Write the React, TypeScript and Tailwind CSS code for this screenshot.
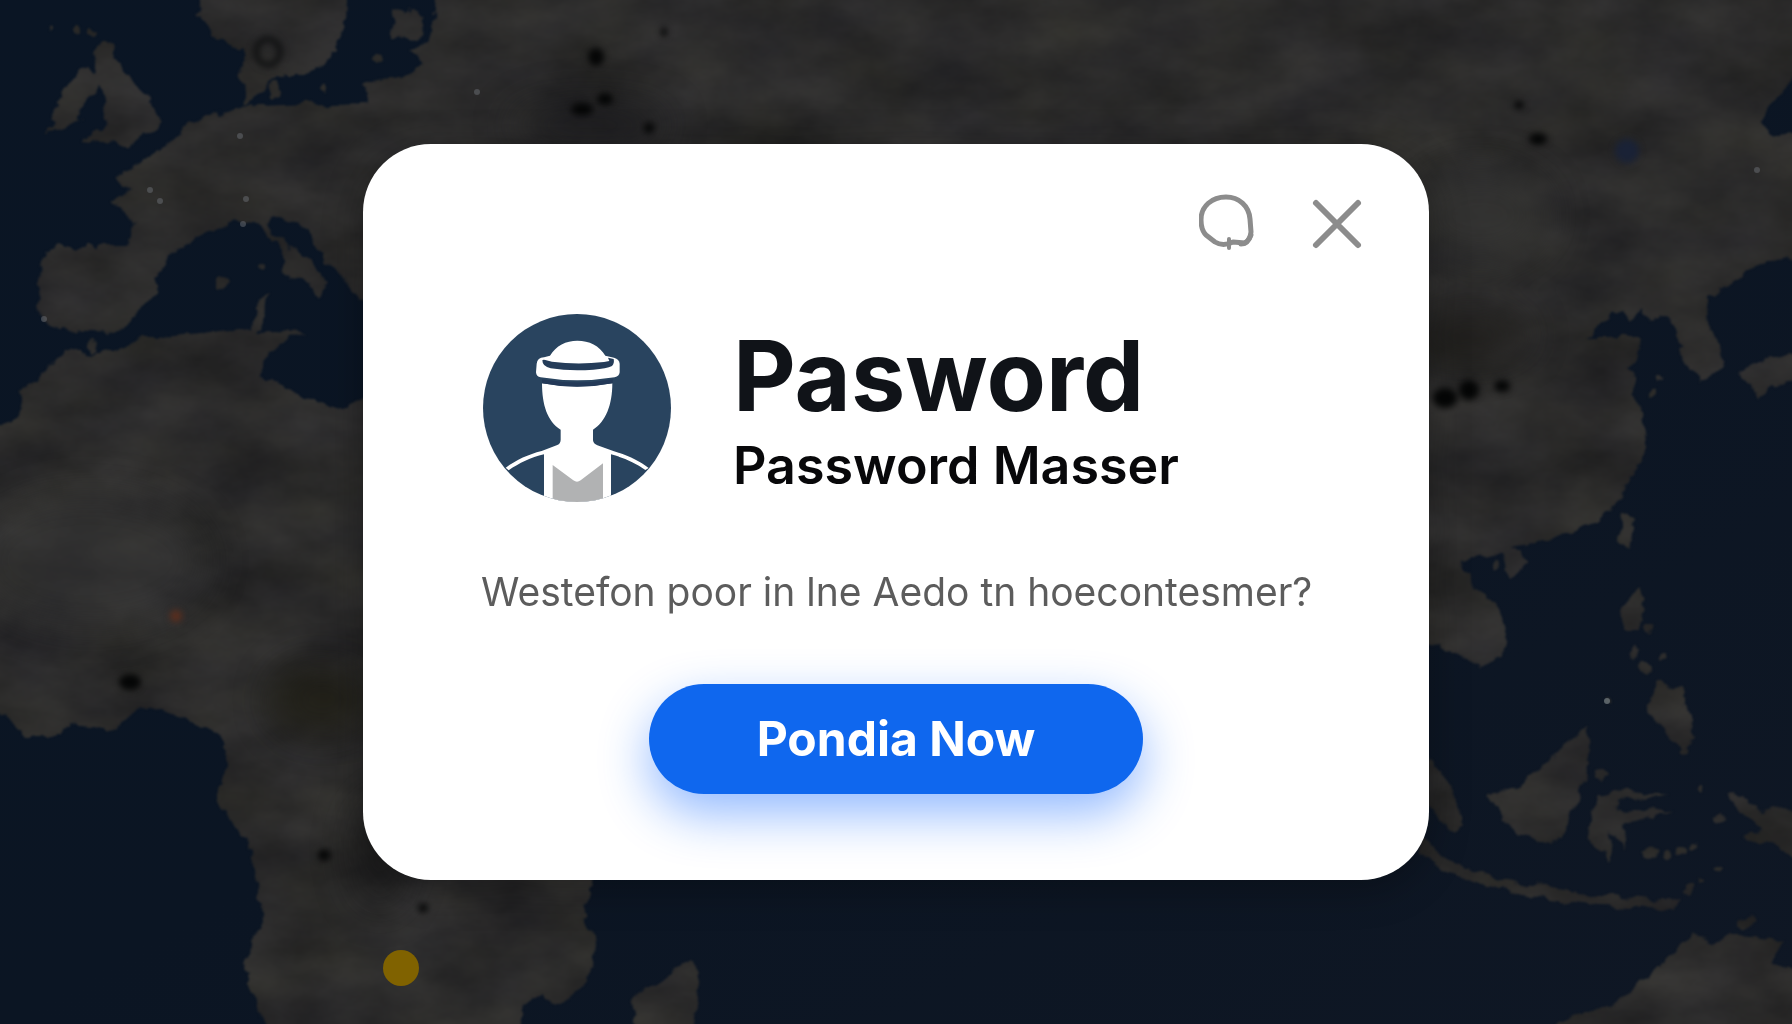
const darkSpots: [number, number, number, number][] = [
  [596, 57, 8, 9],
  [605, 99, 8, 6],
  [582, 109, 11, 6],
  [664, 32, 3, 5],
  [649, 128, 5, 5],
  [1445, 398, 12, 10],
  [1469, 390, 10, 10],
  [1502, 386, 8, 6],
  [1538, 139, 9, 6],
  [1519, 105, 5, 4],
  [130, 682, 11, 8],
  [324, 855, 6, 6],
  [423, 908, 5, 4],
];

const islets: [number, number, number][] = [
  [1607, 701, 4], [1650, 628, 5], [1636, 651, 5], [1660, 658, 4], [1645, 668, 6], [1702, 789, 4],
  [1649, 853, 7], [1667, 855, 5], [1682, 851, 6], [1695, 844, 4], [1689, 890, 4], [1701, 880, 3],
  [1718, 871, 3], [1718, 820, 5], [1747, 922, 6], [1652, 393, 4], [1661, 378, 3], [1685, 754, 5],
  [331, 50, 4], [379, 60, 4], [273, 91, 7], [324, 88, 4], [260, 267, 4], [222, 283, 6], [52, 29, 3],
  [75, 30, 3], [92, 33, 3], [1496, 565, 3], [1600, 775, 6], [94, 345, 5],
];

const glints: [number, number][] = [
  [160, 201], [246, 199], [240, 136], [44, 319], [243, 224], [477, 92], [1757, 170], [150, 190],
];

function WorldMap() {
  return (
    <svg
      className="absolute inset-0 size-full"
      viewBox="0 0 1792 1024"
      preserveAspectRatio="xMidYMid slice"
      aria-hidden="true"
    >
      <defs>
        <linearGradient id="sea" x1="0" y1="0" x2="1" y2="1">
          <stop offset="0" stopColor="#0a1524" />
          <stop offset="0.5" stopColor="#0b1523" />
          <stop offset="1" stopColor="#0f1724" />
        </linearGradient>
        <filter id="coast" x="-40" y="-40" width="1872" height="1104" filterUnits="userSpaceOnUse" colorInterpolationFilters="sRGB">
          <feTurbulence type="fractalNoise" baseFrequency="0.06" numOctaves="3" seed="4" result="edge" />
          <feDisplacementMap in="SourceGraphic" in2="edge" scale="14" xChannelSelector="R" yChannelSelector="G" result="land" />
          <feTurbulence type="fractalNoise" baseFrequency="0.011 0.018" numOctaves="5" seed="11" result="relief" />
          <feColorMatrix
            in="relief"
            type="matrix"
            values="0.11 0 0 0 0.113  0.107 0.003 0 0 0.111  0.095 0 0.025 0 0.105  0 0 0 0 1"
            result="tint"
          />
          <feComposite in="tint" in2="land" operator="in" result="ground" />
          <feGaussianBlur in="ground" stdDeviation="1" />
        </filter>
        <filter id="soft" x="-50%" y="-50%" width="200%" height="200%" colorInterpolationFilters="sRGB">
          <feGaussianBlur stdDeviation="3" />
        </filter>
        <filter id="haze" x="-50%" y="-50%" width="200%" height="200%" colorInterpolationFilters="sRGB">
          <feGaussianBlur stdDeviation="18" />
        </filter>
      </defs>
      <rect width="1792" height="1024" fill="url(#sea)" />
      <g filter="url(#coast)" fill="#2b2b2a">
        <path d="M48 131 57 100 80 68 96 72 92 50 111 43 122 70 149 97 163 123 134 145 84 140 109 124 98 84 88 100 78 125Z" />
        <path d="M197 13 207 -30H348L346 20 329 60 306 75 283 75 268 84 245 106 241 50 214 37Z" />
        <path d="M392 12 410 8 426 22 420 38 394 36Z" />
        <path d="M440-30 432 30 425 43 406 50 424 63 402 77 360 83 370 102 329 103 237 107 191 123 161 150 115 177 130 190 111 200 134 220 126 247 61 247 46 253 36 293 42 320 61 330 119 332 134 317 157 293 157 277 172 253 199 237 230 223 253 220 283 253 283 273 305 280 318 297 326 284 310 262 272 232 268 222 280 217 306 227 318 250 344 280 370 306 900 500 1400 640 1437 645 1480 668 1503 655 1507 622 1490 600 1460 562 1500 553 1510 580 1527 562 1513 545 1547 542 1587 525 1613 512 1640 460 1647 430 1633 393 1640 377 1627 370 1643 347 1637 337 1587 337 1613 310 1630 323 1643 308 1650 322 1670 315 1674 333 1687 363 1700 383 1723 367 1720 343 1703 320 1707 300 1740 277 1767 260 1830 258V140L1770 133 1760 120 1792 80 1830 70V-30Z" />
        <path d="M-30 435 19 417 23 393 65 350 111 353 134 340 230 330 304 332 268 353 260 377 337 410 372 395 560 500 620 800 590 880 583 912 597 945 588 982 556 1009 542 992 523 1005 523 1054H275L243 969 262 919 248 839 216 805 225 759 216 732 161 710 133 712 115 729 69 725 60 737 28 737 -30 690Z" />
        <path d="M250 342 256 300 266 292 264 320Z" />
        <path d="M631 999 643 1054H689L700 975 691 957 657 982Z" />
        <path d="M1587 725 1593 752 1577 802 1560 842 1517 835 1487 795 1520 785 1547 759Z" />
        <path d="M1597 795 1613 790 1670 794 1617 801 1615 812 1675 810 1623 824 1627 850 1612 832 1607 862 1587 835Z" />
        <path d="M1637 588 1647 596 1640 629 1620 629 1623 605Z" />
        <path d="M1657 682 1682 687 1693 735 1683 752 1647 712Z" />
        <path d="M1420 750 1450 785 1462 825 1452 832 1425 800Z" />
        <path d="M1420 838 1460 866 1500 880 1580 892 1650 900 1680 898 1676 908 1600 906 1530 898 1460 878 1420 856Z" />
        <path d="M1727 792 1742 795 1760 812 1780 809 1830 814V875L1770 845 1743 835 1760 828 1735 808Z" />
        <path d="M1737 370 1757 362 1830 345V380L1768 386 1755 403 1750 385Z" />
        <path d="M1547 1054V1028L1575 1014 1613 1005 1657 969 1693 932 1713 942 1730 934 1782 939 1772 962 1830 990V1054Z" />
        <path d="M1622 512 1636 520 1628 548 1620 540Z" />
        {islets.map(([x, y, r]) => (
          <circle key={`${x}-${y}`} cx={x} cy={y} r={r} />
        ))}
      </g>
      <g filter="url(#haze)">
        <ellipse cx="1470" cy="335" rx="60" ry="26" fill="#1a1815" opacity="0.7" />
        <ellipse cx="322" cy="700" rx="50" ry="36" fill="#1c1b11" opacity="0.7" />
        <ellipse cx="590" cy="125" rx="80" ry="26" fill="#17171a" opacity="0.6" />
        <ellipse cx="90" cy="560" rx="120" ry="70" fill="#3a3a39" opacity="0.4" />
        <ellipse cx="1480" cy="215" rx="70" ry="50" fill="#363634" opacity="0.6" />
        <ellipse cx="380" cy="850" rx="30" ry="60" fill="#131313" opacity="0.5" />
      </g>
      <g filter="url(#soft)" fill="#050606">
        {darkSpots.map(([x, y, rx, ry]) => (
          <ellipse key={`${x}-${y}`} cx={x} cy={y} rx={rx} ry={ry} />
        ))}
        <ellipse cx="268" cy="52" rx="12" ry="13" fill="none" stroke="#111213" strokeWidth="6" />
        <circle cx="1627" cy="151" r="12" fill="#1a2236" />
        <circle cx="176" cy="616" r="6" fill="#5a2e1e" />
      </g>
      {glints.map(([x, y]) => (
        <circle key={`${x}-${y}`} cx={x} cy={y} r="3" fill="#6b7075" opacity="0.5" />
      ))}
      <circle cx="1607" cy="701" r="3" fill="#6b7478" opacity="0.8" />
      <circle cx="401" cy="968" r="18" fill="#806200" />
    </svg>
  );
}

function Avatar() {
  return (
    <svg className="size-[188px] shrink-0" viewBox="69 73 564 564" role="img" aria-label="Profile">
      <defs>
        <clipPath id="disc">
          <circle cx="351" cy="355" r="282" />
        </clipPath>
      </defs>
      <g clipPath="url(#disc)">
        <rect x="69" y="73" width="564" height="564" fill="#29445f" />
        <path
          d="M246 281Q351 300 457 281C457 345 438 396 399 420V452Q400 462 412 467L462 485C505 498 540 515 566 535L556 541C525 518 490 504 453 494V640H252V494C212 504 178 520 146 542L137 534C170 510 205 494 245 484L290 467Q302 462 302 450V420C262 396 246 345 246 281Z"
          fill="#fff"
        />
        <path d="M278 526 340 572Q351 580 362 572L429 521V640H278Z" fill="#b1b2b3" />
        <path
          d="M230 222Q232 204 252 203L270 198C288 168 318 153 352 153C388 153 418 168 436 198L462 204Q478 208 479 222V248Q478 260 464 263Q351 281 242 263Q229 261 228 248Z"
          fill="#fff"
        />
        <path
          d="M247 212Q249 209 256 211L276 216Q351 226 432 217L448 214 444 204 461 208Q464 220 456 229Q440 237 400 240Q330 245 272 236Q247 231 247 212Z"
          fill="#243c59"
        />
        <path d="M246 269Q351 288 458 269V281Q351 302 246 281Z" fill="#233958" />
      </g>
    </svg>
  );
}

export default function App() {
  return (
    <main className="relative flex min-h-screen items-center justify-center overflow-hidden bg-[#0b1523] font-[Inter,sans-serif]">
      <WorldMap />
      <section
        role="dialog"
        aria-labelledby="dialog-title"
        className="relative w-full max-w-[1066px] rounded-[68px] bg-white pt-[50px] pb-[86px] shadow-[0_8px_40px_rgba(0,0,0,0.3)]"
      >
        <div className="flex justify-end gap-[54px] pr-16">
          <button type="button" aria-label="Messages" className="size-14 text-[#8c8c8c]">
            <svg viewBox="0 0 56 56" className="size-full" fill="none" stroke="currentColor" strokeWidth="5" strokeLinecap="round" strokeLinejoin="round" aria-hidden="true">
              <path d="M27 3C40 3 50 12 51 25L52 38Q51 46 46 49L34 48Q24 53 16 48L7 41C3 37 2 32 2 26C2 12 13 3 27 3Z" />
              <path d="M42 50Q49 50 52 41" />
              <path d="M30 45V54" strokeWidth="4" />
            </svg>
          </button>
          <button type="button" aria-label="Close" className="size-14 text-[#8c8c8c]">
            <svg viewBox="0 0 56 56" className="size-full" fill="none" stroke="currentColor" strokeWidth="6" strokeLinecap="round" aria-hidden="true">
              <path d="M7 9 49 51M49 9 7 51" />
            </svg>
          </button>
        </div>

        <div className="mt-16 flex items-start gap-[62px] pr-16 pl-[120px]">
          <Avatar />
          <div>
            <h1 id="dialog-title" className="text-[97px] leading-[124px] font-bold text-[#101318]">
              Pasword
            </h1>
            <p className="text-[52px] leading-[56px] font-semibold text-[#08080a]">Password Masser</p>
          </div>
        </div>

        <p className="mt-16 pr-16 pl-[118px] text-[39px] leading-[52px] text-[#5c5c5c]">
          Westefon poor in lne Aedo tn hoecontesmer?
        </p>

        <div className="mt-[66px] flex justify-center">
          <button
            type="button"
            className="h-[110px] rounded-full bg-[#0f67ee] px-[108px] text-[48px] font-bold text-white shadow-[0_20px_50px_rgba(15,103,255,0.45)]"
          >
            Pondia Now
          </button>
        </div>
      </section>
    </main>
  );
}
